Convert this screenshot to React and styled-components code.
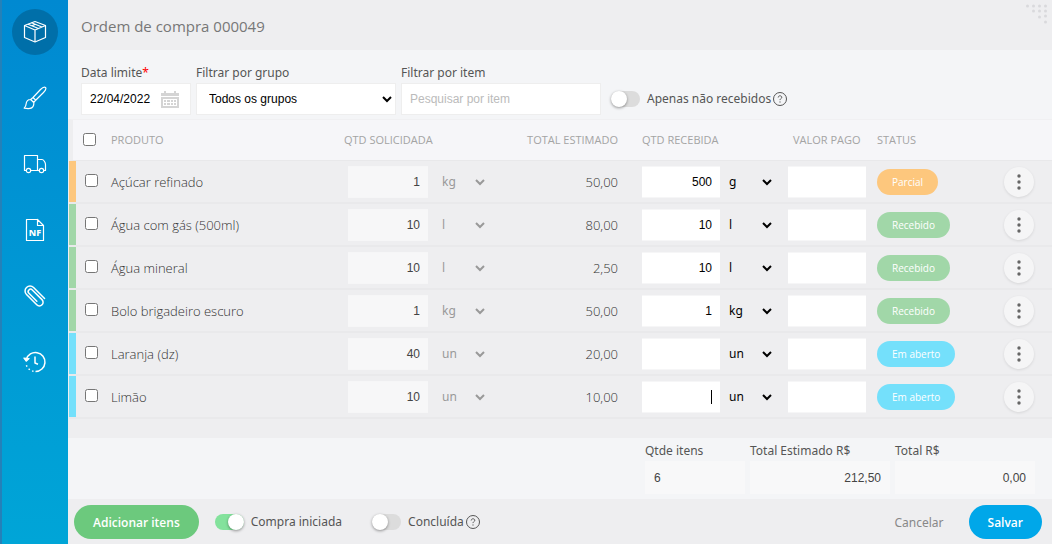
import React, { useState } from 'react'
import styled, { createGlobalStyle, css } from 'styled-components'

const statusColors = {
  Parcial: '#fdc77d',
  Recebido: '#a1d7a8',
  'Em aberto': '#74e0fb'
}

const products = [
  { id: 1, name: 'Açúcar refinado', asked: '1', askedUnit: 'kg', total: '50,00', received: '500', unit: 'g', status: 'Parcial' },
  { id: 2, name: 'Água com gás (500ml)', asked: '10', askedUnit: 'l', total: '80,00', received: '10', unit: 'l', status: 'Recebido' },
  { id: 3, name: 'Água mineral', asked: '10', askedUnit: 'l', total: '2,50', received: '10', unit: 'l', status: 'Recebido' },
  { id: 4, name: 'Bolo brigadeiro escuro', asked: '1', askedUnit: 'kg', total: '50,00', received: '1', unit: 'kg', status: 'Recebido' },
  { id: 5, name: 'Laranja (dz)', asked: '40', askedUnit: 'un', total: '20,00', received: '', unit: 'un', status: 'Em aberto' },
  { id: 6, name: 'Limão', asked: '10', askedUnit: 'un', total: '10,00', received: '', unit: 'un', status: 'Em aberto' }
]

const BoxIcon = () => (
  <Icon viewBox="0 0 24 24">
    <path d="M12 1.5 22.5 5.5v12L12 22 1.5 17.500v-12z" />
    <path d="M1.500 5.500 12 10l10.500-4.500M12 10v12M5 4.200 15.500 8.500M8.500 2.800 19 7M8.500 6 12 4.400" />
  </Icon>
)

const BrushIcon = () => (
  <Icon viewBox="0 0 24 24">
    <path d="M10 11.500 17.500 3.500c1.800-1.800 4-2.800 5-2 .9 1-.2 3.200-2 5L12.700 14.200M10 11.500l2.700 2.700-2 2.300-3-3zM7.700 13.500c-2.700-.2-4.400 1.700-4.600 4.500-.1 1.900-.7 3-1.900 4.200 4.300.9 8.300.5 9.300-2.700.4-1.200.4-2.200.2-3" />
  </Icon>
)

const TruckIcon = () => (
  <Icon viewBox="0 0 24 24">
    <path d="M3.300 18.500H1.500v-15h13v15h-6.800M14.500 7.500h4.500c1.500 0 3.500 3 3.500 5v6h-1.800M14.500 18.500h1.800" />
    <circle cx="5.500" cy="18.500" r="2.200" />
    <circle cx="18.500" cy="18.500" r="2.200" />
  </Icon>
)

const InvoiceIcon = () => (
  <Icon viewBox="0 0 24 24">
    <path d="M3.500 1.500h11l6 6v15h-17zM14.500 1.500v6h6z" />
    <text x="12" y="18">NF</text>
  </Icon>
)

const ClipIcon = () => (
  <Icon viewBox="0 0 24 24">
    <path
      d="M20.500 7H5a5 5 0 0 0 0 10h14.500a3.700 3.700 0 0 0 0-7.400H5.800a2.400 2.400 0 0 0 0 4.800H17"
      transform="rotate(45 12 12)"
      strokeWidth="1.500"
      strokeLinecap="round"
    />
  </Icon>
)

const HistoryIcon = () => (
  <Icon viewBox="0 0 24 24">
    <path d="M3.300 9.500A9.500 9.500 0 1 1 12.500 21.500M12 6.500V13l3 1.200" strokeWidth="1.500" />
    <path d="M10.500 21.300A9.500 9.500 0 0 1 3 14" strokeWidth="1.500" strokeDasharray="1.500 2.500" />
    <path d="m.8 8 2.400 3.200L6 8.500z" fill="#fff" />
  </Icon>
)

const CalendarIcon = () => (
  <svg width="18" height="17" viewBox="0 0 18 17" aria-hidden="true">
    <path d="M0 2h18v3H0zM3 0h2v3H3zM13 0h2v3h-2zM0 6h18v11H0z" fill="#d4d4d4" />
    <path d="M2 8h14v1H2zM2 11h14v1H2zM2 14h14v1H2zM2 8h1v7H2zM5 8h1v7H5zM9 8h1v7H9zM12 8h1v7h-1zM15 8h1v7h-1z" fill="#fff" />
  </svg>
)

const HelpIcon = () => (
  <HelpMark viewBox="0 0 14 14">
    <circle cx="7" cy="7" r="6.500" />
    <path d="M5.200 5.500C5.300 4.400 6 3.800 7 3.800s1.800.6 1.800 1.500C8.800 6.500 7 6.600 7 8.100M7 9.400v1.200" />
  </HelpMark>
)

const navItems = [
  { label: 'Itens', icon: BoxIcon },
  { label: 'Aparência', icon: BrushIcon },
  { label: 'Entrega', icon: TruckIcon },
  { label: 'Nota fiscal', icon: InvoiceIcon },
  { label: 'Anexos', icon: ClipIcon },
  { label: 'Histórico', icon: HistoryIcon }
]

const gripDots = [[0, 0], [6, 0], [12, 0], [18, 0], [6, 5], [12, 5], [18, 5], [12, 11], [18, 10], [18, 16]]

function ProductRow({ product, active }) {
  const [received, setReceived] = useState(product.received)
  const [paid, setPaid] = useState('')
  return (
    <Row>
      <CheckCell $color={statusColors[product.status]}>
        <input type="checkbox" aria-label={product.name} />
      </CheckCell>
      <NameCell>{product.name}</NameCell>
      <td>
        <Group $gap={10}>
          <Quantity disabled value={product.asked} aria-label="Quantidade solicitada" $width={80} />
          <Unit disabled defaultValue={product.askedUnit} aria-label="Unidade solicitada">
            <option>{product.askedUnit}</option>
          </Unit>
        </Group>
      </td>
      <TotalCell>{product.total}</TotalCell>
      <td>
        <Group $gap={5}>
          <Quantity
            autoFocus={active}
            value={received}
            onChange={e => setReceived(e.target.value)}
            aria-label="Quantidade recebida"
            $width={78}
            $caret={active && received === ''}
          />
          <Unit defaultValue={product.unit} aria-label="Unidade recebida">
            <option>{product.unit}</option>
          </Unit>
        </Group>
      </td>
      <td>
        <Quantity value={paid} onChange={e => setPaid(e.target.value)} aria-label="Valor pago" $width={78} />
      </td>
      <td>
        <Badge $color={statusColors[product.status]}>{product.status}</Badge>
      </td>
      <td>
        <MoreButton type="button" aria-label="Mais opções">
          <svg width="4" height="16" viewBox="0 0 4 16">
            <circle cx="2" cy="2" r="1.700" />
            <circle cx="2" cy="8" r="1.700" />
            <circle cx="2" cy="14" r="1.700" />
          </svg>
        </MoreButton>
      </td>
    </Row>
  )
}

function App() {
  return (
    <Page>
      <GlobalStyle />
      <Sidebar>
        {navItems.map(({ label, icon: NavIcon }, i) => (
          <NavButton key={label} type="button" aria-label={label} $active={i === 0}>
            <NavIcon />
          </NavButton>
        ))}
      </Sidebar>
      <Main>
        <Header>
          <Title>Ordem de compra 000049</Title>
          <svg width="21" height="20" viewBox="0 0 21 20" fill="#d9d9dc" aria-hidden="true">
            {gripDots.map(([x, y]) => (
              <circle key={`${x}-${y}`} cx={x + 1.5} cy={y + 2} r="1.500" />
            ))}
          </svg>
        </Header>
        <Filters>
          <Field $width={110}>
            <label htmlFor="deadline">
              Data limite<Required>*</Required>
            </label>
            <DateBox>
              <input id="deadline" defaultValue="22/04/2022" />
              <CalendarIcon />
            </DateBox>
          </Field>
          <Field $width={200}>
            <label htmlFor="group">Filtrar por grupo</label>
            <GroupSelect id="group">
              <option>Todos os grupos</option>
            </GroupSelect>
          </Field>
          <Field $width={200}>
            <label htmlFor="item">Filtrar por item</label>
            <TextInput id="item" placeholder="Pesquisar por item" />
          </Field>
          <FilterToggle>
            <Switch type="checkbox" />
            Apenas não recebidos
            <HelpIcon />
          </FilterToggle>
        </Filters>
        <TableArea>
          <Table>
            <colgroup>
              <Col $width={42} />
              <col />
              <Col $width={146} />
              <Col $width={128} />
              <Col $width={170} />
              <Col $width={89} />
              <Col $width={109} />
              <Col $width={66} />
            </colgroup>
            <thead>
              <tr>
                <HeadCheck>
                  <input type="checkbox" aria-label="Selecionar todos" />
                </HeadCheck>
                <Th>PRODUTO</Th>
                <Th>QTD SOLICIDADA</Th>
                <Th $align="right">TOTAL ESTIMADO</Th>
                <Th $indent={24}>QTD RECEBIDA</Th>
                <Th $indent={5}>VALOR PAGO</Th>
                <Th>STATUS</Th>
                <Th aria-label="Ações" />
              </tr>
            </thead>
            <tbody>
              {products.map(product => (
                <ProductRow key={product.id} product={product} active={product.id === 6} />
              ))}
            </tbody>
          </Table>
        </TableArea>
        <Totals>
          <TotalField $width={100}>
            <label htmlFor="count">Qtde itens</label>
            <input id="count" readOnly value="6" />
          </TotalField>
          <TotalField $width={140} $align="right">
            <label htmlFor="estimated">Total Estimado R$</label>
            <input id="estimated" readOnly value="212,50" />
          </TotalField>
          <TotalField $width={140} $align="right">
            <label htmlFor="total">Total R$</label>
            <input id="total" readOnly value="0,00" />
          </TotalField>
        </Totals>
        <Footer>
          <Pill type="button" $color="#6cc97d">Adicionar itens</Pill>
          <ToggleLabel>
            <Switch type="checkbox" defaultChecked />
            Compra iniciada
          </ToggleLabel>
          <ToggleLabel>
            <Switch type="checkbox" />
            Concluída
            <HelpIcon />
          </ToggleLabel>
          <Actions>
            <CancelButton type="button">Cancelar</CancelButton>
            <Pill type="button" $color="#00a7e9">Salvar</Pill>
          </Actions>
        </Footer>
      </Main>
    </Page>
  )
}

const GlobalStyle = createGlobalStyle`
  * {
    box-sizing: border-box;
  }
  body {
    margin: 0;
    background: #eeeef0;
    color: #555;
    font-family: 'Noto Sans', 'Open Sans', sans-serif;
    font-size: 12px;
  }
  button,
  input,
  select {
    font-family: inherit;
    font-size: 12px;
    outline: none;
  }
  input[type='checkbox'] {
    margin: 0;
  }
`

const Page = styled.div`
  display: flex;
  min-height: 100vh;
`

const Sidebar = styled.nav`
  display: flex;
  flex: none;
  flex-direction: column;
  align-items: center;
  gap: 20px;
  width: 68px;
  padding-top: 9px;
  border-left: 2px solid #2481b9;
  background: linear-gradient(#0089d1, #00a5d7);
`

const NavButton = styled.button`
  display: flex;
  align-items: center;
  justify-content: center;
  width: 46px;
  height: 46px;
  padding: 0;
  border: 0;
  border-radius: 50%;
  background: ${p => (p.$active ? '#006fa9' : 'transparent')};
`

const Icon = styled.svg`
  width: 24px;
  height: 24px;
  fill: none;
  stroke: #fff;
  stroke-width: 1.2;
  stroke-linejoin: round;
  text {
    fill: #fff;
    stroke: none;
    font-size: 9px;
    font-weight: 800;
    text-anchor: middle;
  }
`

const Main = styled.main`
  display: flex;
  flex: 1;
  flex-direction: column;
  min-width: 0;
`

const Header = styled.header`
  display: flex;
  justify-content: space-between;
  height: 50px;
  padding: 4px 5px 0 13px;
`

const Title = styled.h1`
  margin: 0;
  color: #777;
  font-family: 'Open Sans', sans-serif;
  font-size: 15px;
  font-weight: 400;
  line-height: 44px;
`

const Filters = styled.div`
  display: flex;
  align-items: flex-end;
  gap: 5px;
  padding: 13px 13px 4px;
  background: #f4f5f7;
`

const Field = styled.div`
  display: flex;
  flex-direction: column;
  width: ${p => p.$width}px;
  label {
    line-height: 20px;
  }
`

const Required = styled.span`
  color: #f00;
`

const DateBox = styled.div`
  display: flex;
  align-items: center;
  height: 32px;
  padding: 0 11px 0 8px;
  border: 1px solid #eee;
  background: #fff;
  input {
    flex: 1;
    min-width: 0;
    padding: 0;
    border: 0;
    font-family: 'Liberation Sans', Arial, sans-serif;
  }
`

const GroupSelect = styled.select`
  height: 32px;
  padding: 0 0 0 8px;
  border: 1px solid #eee;
  border-radius: 0;
  background-color: #fff;
  color: #000;
  font-family: 'Liberation Sans', Arial, sans-serif;
`

const TextInput = styled.input`
  height: 32px;
  padding: 0 8px;
  border: 1px solid #eee;
  font-family: 'Liberation Sans', Arial, sans-serif;
  &::placeholder {
    color: #bbb;
  }
`

const ToggleLabel = styled.label`
  display: flex;
  align-items: center;
  line-height: 32px;
`

const FilterToggle = styled(ToggleLabel)`
  margin-left: 5px;
`

const Switch = styled.input`
  display: flex;
  align-items: center;
  width: 29px;
  height: 16px;
  margin-right: 7px !important;
  border-radius: 8px;
  background: #dcdcdc;
  appearance: none;
  &::before {
    width: 16px;
    height: 16px;
    border-radius: 50%;
    background: #fff;
    box-shadow: 0 1px 3px rgba(0, 0, 0, 0.4);
    content: '';
  }
  &:checked {
    justify-content: flex-end;
    background: #83e29c;
  }
`

const HelpMark = styled.svg`
  width: 14px;
  height: 14px;
  margin-left: 2px;
  fill: none;
  stroke: #555;
`

const TableArea = styled.section`
  flex: 1;
  padding: 0 0 18px 1px;
`

const Table = styled.table`
  width: 100%;
  border-spacing: 0;
  table-layout: fixed;
  td {
    padding: 0;
  }
`

const Col = styled.col`
  width: ${p => p.$width}px;
`

const Th = styled.th`
  height: 42px;
  padding: 0 0 2px ${p => p.$indent || 0}px;
  border-top: 1px solid #f0f0f2;
  border-bottom: 1px solid #e8e8ea;
  background: #f6f6f9;
  color: #a4a4a4;
  font-family: 'Open Sans', sans-serif;
  font-size: 11px;
  font-weight: 400;
  text-align: ${p => p.$align || 'left'};
  white-space: nowrap;
`

const HeadCheck = styled(Th)`
  padding-left: 10px;
  border-left: 4px solid #eeeef0;
  input {
    display: block;
  }
`

const Row = styled.tr`
  td {
    height: 43px;
    border-bottom: 2px solid #e9e9eb;
  }
  td:nth-child(3) {
    padding-left: 4px;
  }
  td:nth-child(5) {
    padding-left: 24px;
  }
`

const CheckCell = styled.td`
  background: linear-gradient(${p => p.$color}, ${p => p.$color}) left / 7px 100% no-repeat;
  input {
    display: block;
    margin: 0 0 3px 16px !important;
  }
`

const NameCell = styled.td`
  color: #333;
  font-family: 'Open Sans', sans-serif;
  font-size: 13px;
  font-weight: 300;
`

const TotalCell = styled(NameCell)`
  text-align: right;
`

const Group = styled.div`
  display: flex;
  align-items: center;
  gap: ${p => p.$gap}px;
`

const Quantity = styled.input`
  display: block;
  width: ${p => p.$width}px;
  height: 32px;
  padding: 0 8px;
  border: 1px solid #f6f6f7;
  border-width: 1px 0;
  background: #fff;
  color: #000;
  font-family: 'Liberation Sans', Arial, sans-serif;
  text-align: right;
  &:disabled {
    background: #f7f7f8;
    color: #444;
  }
  ${p =>
    p.$caret &&
    css`
      background: linear-gradient(#000, #000) right 8px center / 1px 14px no-repeat #fff;
      caret-color: transparent;
    `}
`

const Unit = styled.select`
  width: 50px;
  height: 32px;
  padding: 0;
  border: 0;
  background-color: transparent;
  color: #000;
  &:disabled {
    color: #999;
    opacity: 1;
  }
`

const Badge = styled.span`
  display: inline-block;
  padding: 0 15px;
  border-radius: 13px;
  background: ${p => p.$color};
  color: #fff;
  font-family: 'Open Sans', sans-serif;
  font-size: 10px;
  line-height: 26px;
  white-space: nowrap;
`

const MoreButton = styled.button`
  display: flex;
  align-items: center;
  justify-content: center;
  width: 30px;
  height: 30px;
  margin-left: 18px;
  padding: 0;
  border: 0;
  border-radius: 50%;
  background: #f5f5f6;
  box-shadow: 0 1px 3px rgba(0, 0, 0, 0.1);
  fill: #666;
`

const Totals = styled.section`
  display: flex;
  justify-content: flex-end;
  gap: 5px;
  padding: 3px 17px 5px;
  background: #f4f5f7;
`

const TotalField = styled.div`
  display: flex;
  flex-direction: column;
  width: ${p => p.$width}px;
  label {
    line-height: 20px;
  }
  input {
    height: 33px;
    padding: 0 9px;
    border: 0;
    background: #f8f8f9;
    color: #444;
    font-family: 'Liberation Sans', Arial, sans-serif;
    text-align: ${p => p.$align || 'left'};
  }
`

const Footer = styled.footer`
  display: flex;
  align-items: center;
  padding: 6px 10px 5px 6px;
  ${ToggleLabel} {
    margin-left: 16px;
  }
  ${ToggleLabel} + ${ToggleLabel} {
    margin-left: 30px;
  }
`

const Pill = styled.button`
  height: 34px;
  padding: 0 19px;
  border: 0;
  border-radius: 17px;
  background: ${p => p.$color};
  color: #fff;
  font-family: 'Open Sans', sans-serif;
  font-weight: 600;
`

const Actions = styled.div`
  display: flex;
  gap: 25px;
  margin-left: auto;
`

const CancelButton = styled.button`
  padding: 0;
  border: 0;
  background: none;
  color: #888;
`

export default App
